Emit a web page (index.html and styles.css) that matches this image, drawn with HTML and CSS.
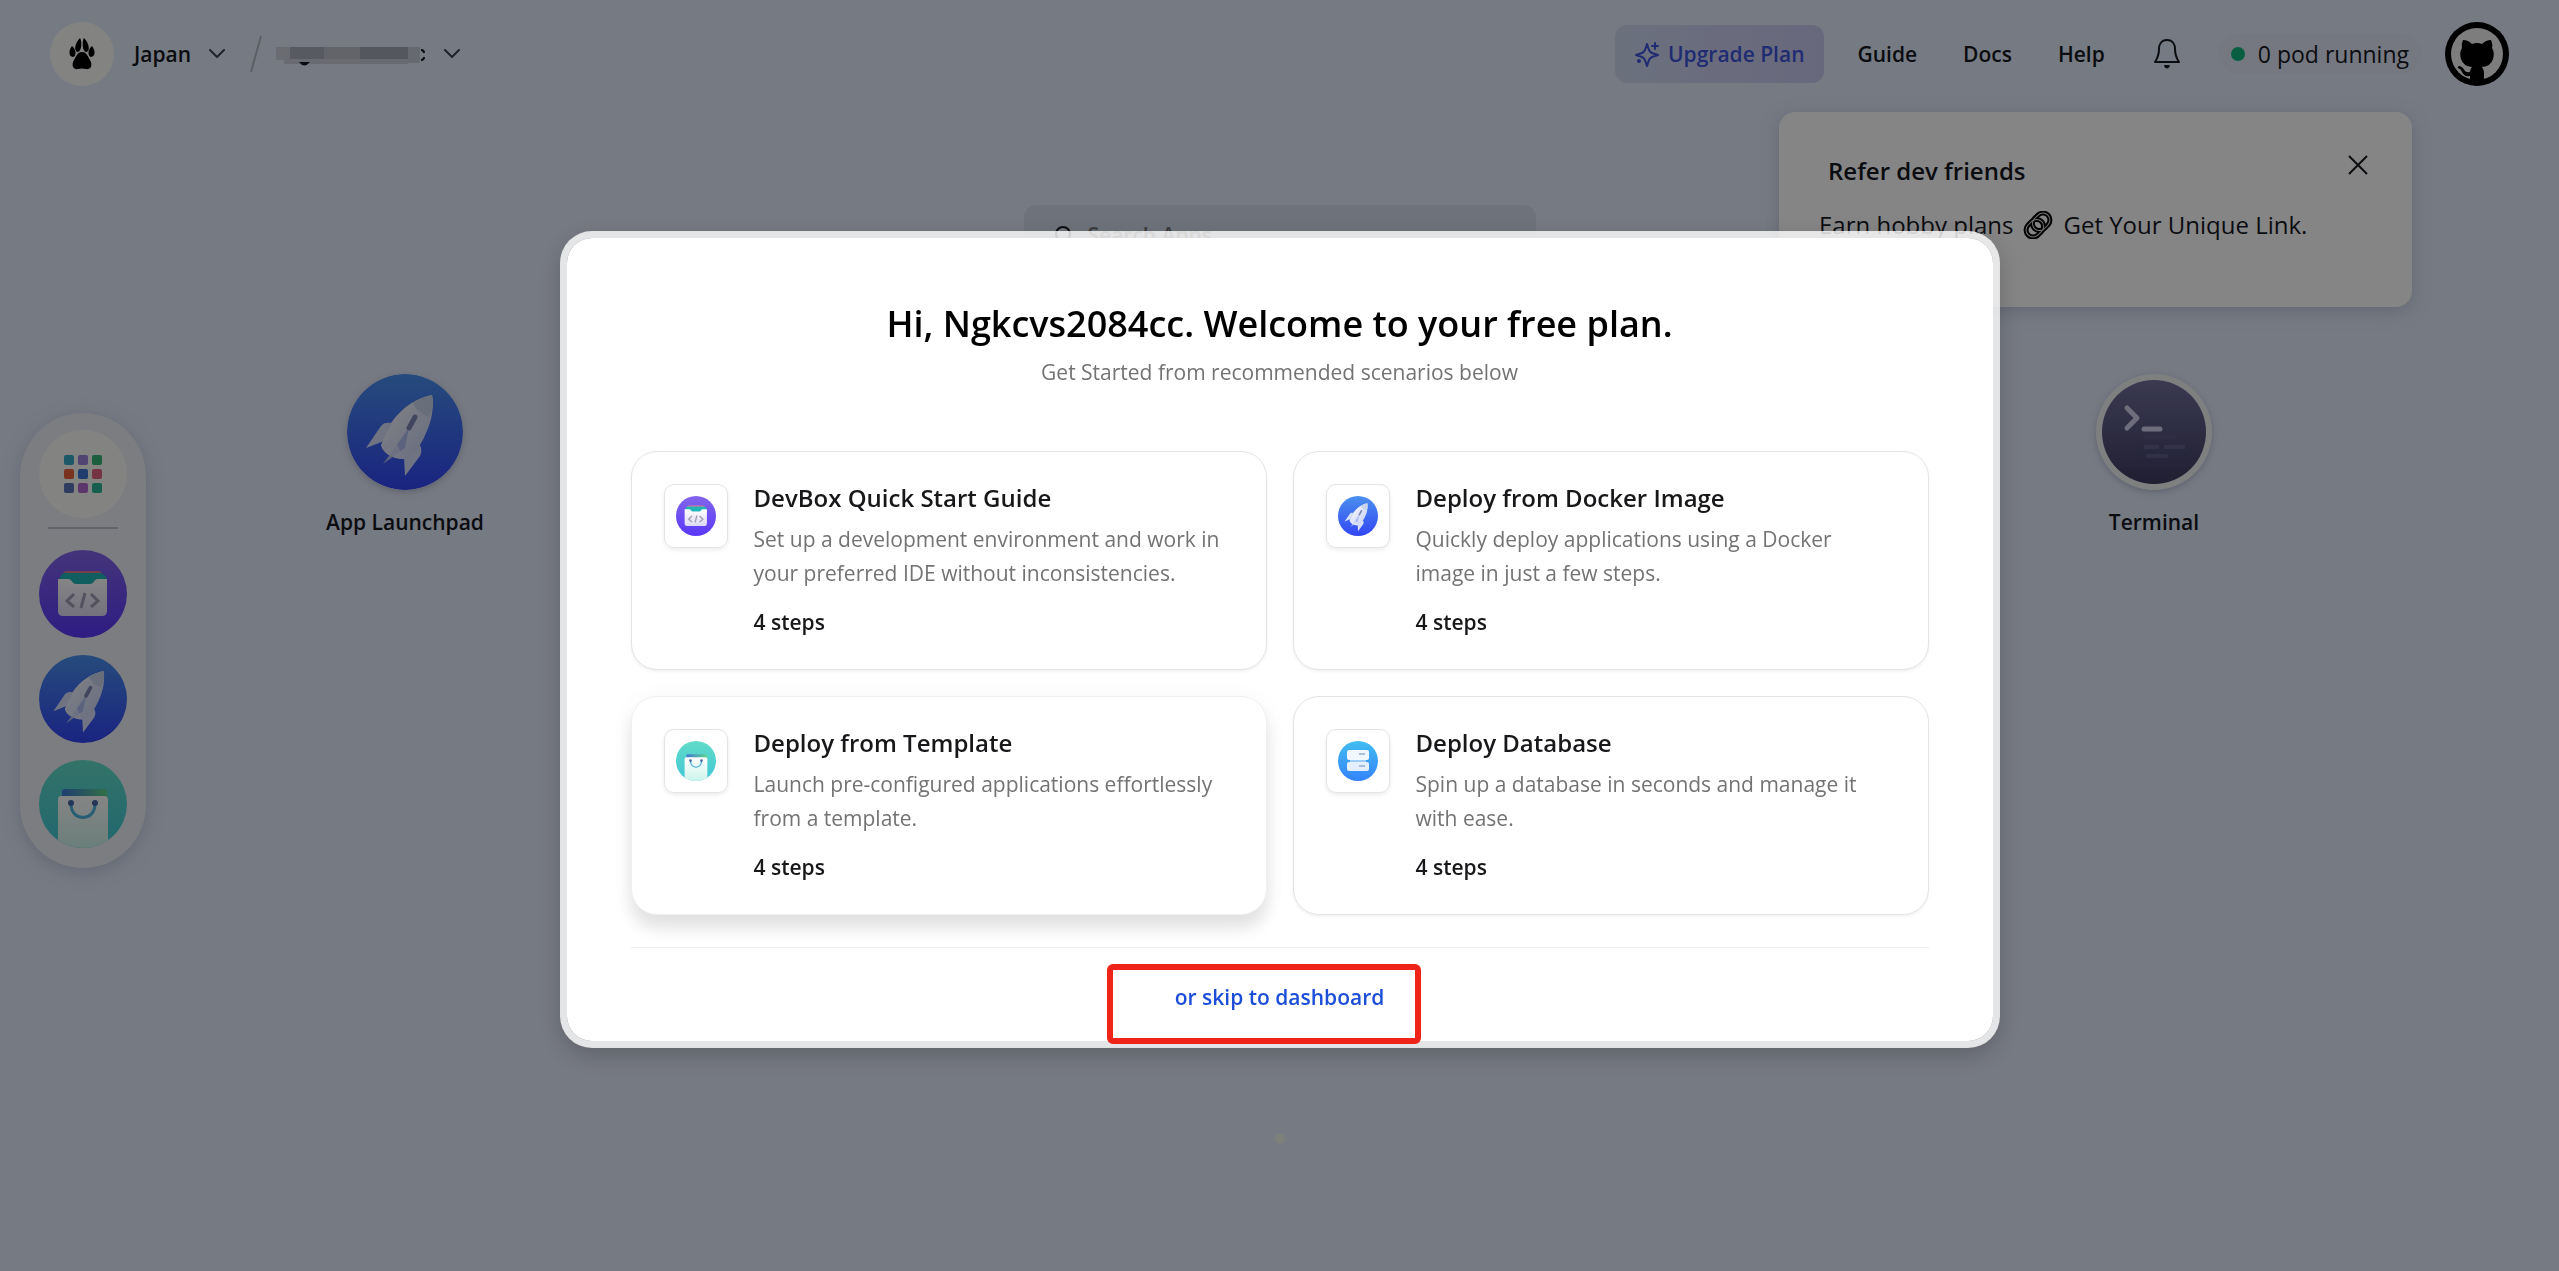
FILE: index.html
```html
<!DOCTYPE html>
<html lang="en">
<head>
<meta charset="utf-8">
<meta name="viewport" content="width=device-width, initial-scale=1">
<title>Dashboard</title>
<link rel="stylesheet" href="styles.css">
</head>
<body>
<svg class="defs" aria-hidden="true">
  <defs>
    <linearGradient id="g-blue" x1="0" y1="0" x2="0" y2="1"><stop offset="0" stop-color="#4a90ee"/><stop offset="1" stop-color="#3245f5"/></linearGradient>
    <linearGradient id="g-purple" x1="0" y1="0" x2="0" y2="1"><stop offset="0" stop-color="#8265ea"/><stop offset="1" stop-color="#5a37fa"/></linearGradient>
    <linearGradient id="g-teal" x1="0" y1="0" x2="0" y2="1"><stop offset="0" stop-color="#62dcc8"/><stop offset="1" stop-color="#3fc6d6"/></linearGradient>
    <linearGradient id="g-sky" x1="0" y1="0" x2="0" y2="1"><stop offset="0" stop-color="#40bdf0"/><stop offset="1" stop-color="#3583fa"/></linearGradient>
    <linearGradient id="g-night" x1="0" y1="0" x2="0" y2="1"><stop offset="0" stop-color="#706f9c"/><stop offset="1" stop-color="#3e3c60"/></linearGradient>
    <linearGradient id="g-body" x1="0" y1="0" x2="1" y2="1"><stop offset="0" stop-color="#ffffff"/><stop offset="1" stop-color="#c3cdf5"/></linearGradient>
    <linearGradient id="g-paper" x1="0" y1="0" x2="0" y2="1"><stop offset="0" stop-color="#ffffff"/><stop offset="1" stop-color="#dcd9f2"/></linearGradient>
    <linearGradient id="g-bag" x1="0" y1="0" x2="0" y2="1"><stop offset="0" stop-color="#ffffff"/><stop offset="1" stop-color="#cdf3ea"/></linearGradient>
    <linearGradient id="g-rim" x1="0" y1="0" x2="1" y2="0"><stop offset="0" stop-color="#3f77d8"/><stop offset="1" stop-color="#5fd68a"/></linearGradient>
    <clipPath id="c-bag"><circle cx="44" cy="44" r="44"/></clipPath>
    <symbol id="i-rocket" viewBox="0 0 116 116">
      <circle cx="58" cy="58" r="58" fill="url(#g-blue)"/>
      <path d="M44 49C40 48 36 49 34 52L19 74L37 67ZM72 70C75 74 75 78 73 82L58 102L57 83Z" fill="#d7defa"/>
      <path d="M85 21C70 24 56 32 44 49L34 71C36 79 45 85 57 85C66 81 74 72 79 59C85 46 87 34 85 21Z" fill="url(#g-body)"/>
      <path d="M85 21C79 22 71 26 66 29C69 36 74 40 82 43C86 35 87 28 85 21Z" fill="#c8d5ec"/>
      <path d="M62 54L36 90L58 74Z" fill="#aebcf0"/>
      <path d="M34 71L46 62L57 85C45 85 36 79 34 71Z" fill="#dfe5fc" opacity=".7"/>
      <path d="M68 43L62 54" stroke="#7e86b5" stroke-width="5" stroke-linecap="round"/>
    </symbol>
    <symbol id="i-devbox" viewBox="0 0 88 88">
      <circle cx="44" cy="44" r="44" fill="url(#g-purple)"/>
      <rect x="24" y="21" width="39" height="12" rx="4" fill="#e0788c"/>
      <path d="M25 23H62Q67 25 68 30V36H20V30Q21 25 25 23Z" fill="#1fb5b8"/>
      <path d="M19 29H29C33 29 33 34 37 34H51C55 34 55 29 59 29H68V61Q68 66 63 66H24Q19 66 19 61Z" fill="url(#g-paper)"/>
      <path d="M35 44L28 51L35 57M46 43L42 58M52 44L59 51L52 57" fill="none" stroke="#a09db5" stroke-width="3"/>
    </symbol>
    <symbol id="i-bag" viewBox="0 0 88 88">
      <circle cx="44" cy="44" r="44" fill="url(#g-teal)"/>
      <g clip-path="url(#c-bag)">
        <rect x="23" y="29" width="45" height="16" rx="3" fill="url(#g-rim)"/>
        <path d="M22 36H65Q69 36 69 40V88H19V40Q19 36 22 36Z" fill="url(#g-bag)"/>
      </g>
      <path d="M32 44C32 62 56 62 56 44" fill="none" stroke="#4bb4dc" stroke-width="3"/>
      <circle cx="32" cy="43" r="3" fill="#4669a8"/><circle cx="56" cy="43" r="3" fill="#4669a8"/>
    </symbol>
    <symbol id="i-database" viewBox="0 0 40 40">
      <circle cx="20" cy="20" r="20" fill="url(#g-sky)"/>
      <rect x="9" y="9" width="22" height="10" rx="2" fill="#f1f7ff"/>
      <rect x="12" y="19" width="16" height="3" fill="#9ccdfc"/>
      <rect x="9" y="21" width="22" height="9" rx="2" fill="#e4f0ff"/>
      <path d="M21 13H27M21 25H27" stroke="#a8bfe0" stroke-width="2"/>
    </symbol>
    <symbol id="i-terminal" viewBox="0 0 116 116">
      <circle cx="58" cy="58" r="58" fill="#f2f3f4"/>
      <circle cx="58" cy="58" r="52" fill="url(#g-night)"/>
      <path d="M31 34L41 44L31 54M48 55H64" fill="none" stroke="#d2d2ee" stroke-width="5" stroke-linecap="round" stroke-linejoin="round"/>
      <path d="M48 73H63M68 73H89M50 82H72" stroke="#8583b8" stroke-width="4" opacity=".35"/>
      <path d="M48 63H80" stroke="#8583b8" stroke-width="3" opacity=".15"/>
    </symbol>
    <symbol id="i-chevron" viewBox="0 0 16 10">
      <path d="M1 1L8 8L15 1" fill="none" stroke="currentColor" stroke-width="2" stroke-linecap="round" stroke-linejoin="round"/>
    </symbol>
  </defs>
</svg>

<header class="topbar">
  <div class="workspace">
    <span class="brand">
      <svg width="26" height="32" viewBox="0 0 26 32" aria-label="Home">
        <path d="M11 0C13 3 13 13 9 14C5 14 5 6 11 0ZM15 0C13 3 13 13 17 14C21 14 21 6 15 0Z"/>
        <path d="M3 8C7 11 8 18 4 19C0 19-1 13 3 8ZM23 8C19 11 18 18 22 19C26 19 27 13 23 8Z"/>
        <path d="M13 14C18 14 19 19 21 22C24 27 22 32 17 31Q13 30 9 31C4 32 2 27 5 22C7 19 8 14 13 14Z"/>
      </svg>
    </span>
    <button class="picker" type="button">Japan <svg width="16" height="10"><use href="#i-chevron"/></svg></button>
    <svg class="slash" width="12" height="38" viewBox="0 0 12 38"><path d="M11 1L1 37" stroke="#b2b6c4" stroke-width="2"/></svg>
    <button class="picker" type="button" aria-label="Workspace">
      <svg width="150" height="24" viewBox="0 0 150 24">
        <path d="M145 8Q148 8 148 11M145 18Q148 18 148 15" fill="none" stroke="#14161f" stroke-width="2"/>
        <rect y="5" width="14" height="13" fill="#cccfda"/><rect x="14" y="5" width="34" height="12" fill="#a8acb9"/>
        <rect x="48" y="5" width="36" height="12" fill="#bcc0cb"/><rect x="84" y="5" width="48" height="12" fill="#a4a8b5"/>
        <rect x="132" y="5" width="12" height="16" fill="#c6cad6"/><rect x="8" y="17" width="124" height="5" fill="#c9cdd9"/>
        <path d="M23 20Q28 27 34 20Z" fill="#14161f"/>
      </svg>
      <svg width="16" height="10"><use href="#i-chevron"/></svg>
    </button>
  </div>
  <nav class="menu">
    <button class="upgrade" type="button">
      <svg width="26" height="26" viewBox="0 0 26 26" fill="none" stroke="currentColor" stroke-width="2" stroke-linejoin="round" stroke-linecap="round"><path d="M13 3Q14 6 15 9Q16 11 18 12L24 14L18 16Q16 17 15 19L13 25L11 19Q10 17 8 16L2 14L8 12Q10 11 11 9ZM21 2V8M18 5H24"/><circle cx="5" cy="20" r="1"/></svg>
      Upgrade Plan
    </button>
    <a href="#guide">Guide</a>
    <a href="#docs">Docs</a>
    <a href="#help">Help</a>
    <button class="bell" type="button" aria-label="Notifications">
      <svg width="28" height="32" viewBox="0 0 28 32" fill="none" stroke="currentColor" stroke-width="2" stroke-linejoin="round" stroke-linecap="round"><path d="M14 2C8 2 6 7 6 11C6 18 4 21 2 24H26C24 21 22 18 22 11C22 7 20 2 14 2Z"/><path d="M12 28Q14 31 16 28Z" fill="currentColor"/></svg>
    </button>
    <span class="pods"><i class="pods-dot"></i>0 pod running</span>
    <svg class="avatar" width="64" height="64" viewBox="0 0 64 64" role="img" aria-label="Account">
      <circle cx="32" cy="32" r="32" fill="#000"/><circle cx="32" cy="32" r="26" fill="#f1efef"/>
      <path d="M18 18Q23 18 27 22Q32 20 37 22Q41 18 46 18Q48 23 47 26Q50 31 48 37Q46 44 37 45Q39 48 39 51V62H25V54Q19 55 17 50Q16 47 13 46Q12 44 15 44Q18 45 20 49Q22 51 25 50Q25 47 27 45Q18 44 16 37Q14 31 17 26Q16 22 18 18Z" fill="#000"/>
    </svg>
  </nav>
</header>

<main class="desktop">
  <aside class="dock">
    <button class="dock-grid" type="button" aria-label="All apps">
      <svg width="38" height="38" viewBox="0 0 38 38">
        <rect width="10" height="10" rx="2" fill="#39a9c8"/><rect x="14" width="10" height="10" rx="2" fill="#9b82da"/><rect x="28" width="10" height="10" rx="2" fill="#38b478"/>
        <rect y="14" width="10" height="10" rx="2" fill="#e8623c"/><rect x="14" y="14" width="10" height="10" rx="2" fill="#3f72d2"/><rect x="28" y="14" width="10" height="10" rx="2" fill="#e2627f"/>
        <rect y="28" width="10" height="10" rx="2" fill="#5873b8"/><rect x="14" y="28" width="10" height="10" rx="2" fill="#b168cc"/><rect x="28" y="28" width="10" height="10" rx="2" fill="#2fb597"/>
      </svg>
    </button>
    <hr class="dock-line">
    <button type="button" aria-label="DevBox"><svg><use href="#i-devbox"/></svg></button>
    <button type="button" aria-label="App Launchpad"><svg><use href="#i-rocket"/></svg></button>
    <button type="button" aria-label="App Store"><svg><use href="#i-bag"/></svg></button>
  </aside>
  <div class="center">
    <label class="search">
      <svg width="20" height="20" viewBox="0 0 20 20" fill="none" stroke="currentColor" stroke-width="2"><circle cx="9" cy="9" r="7"/><path d="M14 14L19 19"/></svg>
      <input type="search" placeholder="Search Apps" aria-label="Search Apps">
    </label>
    <div class="apps">
      <button class="app" type="button"><svg><use href="#i-rocket"/></svg>App Launchpad</button>
      <button class="app" type="button"><svg><use href="#i-terminal"/></svg>Terminal</button>
    </div>
    <i class="page-dot"></i>
  </div>
</main>

<section class="refer">
  <div class="refer-head">
    <h2>Refer dev friends</h2>
    <button type="button" aria-label="Close"><svg width="20" height="20" viewBox="0 0 20 20"><path d="M1 1L19 19M19 1L1 19" stroke="currentColor" stroke-width="2"/></svg></button>
  </div>
  <p>Earn hobby plans
    <svg width="30" height="28" viewBox="0 0 30 28" fill="none"><g transform="rotate(-45 15 14)"><rect x="1" y="7" width="19" height="14" rx="7" stroke="#000" stroke-width="5"/><rect x="10" y="7" width="19" height="14" rx="7" stroke="#000" stroke-width="5"/><rect x="1" y="7" width="19" height="14" rx="7" stroke="#ddd"/><rect x="10" y="7" width="19" height="14" rx="7" stroke="#ddd"/></g></svg>
    Get Your Unique Link.</p>
</section>

<div class="backdrop">
  <section class="modal" role="dialog" aria-modal="true" aria-labelledby="welcome">
    <h1 id="welcome">Hi, Ngkcvs2084cc. Welcome to your free plan.</h1>
    <p class="lead">Get Started from recommended scenarios below</p>
    <div class="cards">
      <article class="card">
        <span class="card-icon"><svg><use href="#i-devbox"/></svg></span>
        <div><h3>DevBox Quick Start Guide</h3><p>Set up a development environment and work in<br>your preferred IDE without inconsistencies.</p><b>4 steps</b></div>
      </article>
      <article class="card">
        <span class="card-icon"><svg><use href="#i-rocket"/></svg></span>
        <div><h3>Deploy from Docker Image</h3><p>Quickly deploy applications using a Docker<br>image in just a few steps.</p><b>4 steps</b></div>
      </article>
      <article class="card card-raised">
        <span class="card-icon"><svg><use href="#i-bag"/></svg></span>
        <div><h3>Deploy from Template</h3><p>Launch pre-configured applications effortlessly<br>from a template.</p><b>4 steps</b></div>
      </article>
      <article class="card">
        <span class="card-icon"><svg><use href="#i-database"/></svg></span>
        <div><h3>Deploy Database</h3><p>Spin up a database in seconds and manage it<br>with ease.</p><b>4 steps</b></div>
      </article>
    </div>
    <footer class="modal-foot">
      <a href="#dashboard">or skip to dashboard</a>
      <span class="callout"></span>
    </footer>
  </section>
</div>
</body>
</html>
```
FILE: styles.css
```css
* { box-sizing: border-box; }

body {
  margin: 0;
  min-height: 100vh;
  display: flex;
  flex-direction: column;
  position: relative;
  background: #e3eafb;
  color: #16181f;
  font: 600 21px/32px "Open Sans", "Noto Sans", sans-serif;
}

h1, h2, h3, p { margin: 0; font-weight: 600; }
a { color: inherit; text-decoration: none; }
button { padding: 0; border: 0; background: none; color: inherit; font: inherit; cursor: pointer; }
svg { display: block; flex: none; }
.defs { position: absolute; width: 0; height: 0; }

/* top bar */
.topbar {
  display: flex;
  justify-content: space-between;
  align-items: center;
  height: 108px;
  padding: 0 50px;
}
.workspace { display: flex; align-items: center; }
.brand {
  display: grid;
  place-items: center;
  width: 64px;
  height: 64px;
  margin-right: 20px;
  border-radius: 50%;
  background: #fbfbfa;
}
.picker { display: flex; align-items: center; gap: 18px; }
.picker svg { color: #3d4254; }
.slash { margin: 0 14px 0 25px; }
.menu { display: flex; align-items: center; }
.menu a { margin-left: 46px; }
.upgrade {
  display: flex;
  align-items: center;
  gap: 8px;
  height: 58px;
  margin-right: -12px;
  padding: 0 19px;
  border-radius: 12px;
  background: linear-gradient(90deg, #cbd9f0, #cccdf0 60%, #c6c8ec);
  color: #3c55da;
}
.bell { margin: 0 38px 0 48px; }
.pods {
  display: flex;
  align-items: center;
  gap: 13px;
  padding: 4px 12px;
  border-radius: 20px;
  background: #e0e6f6;
  font-size: 23px;
  font-weight: 400;
}
.pods-dot { width: 14px; height: 14px; border-radius: 50%; background: #0fb57e; }
.avatar { margin-left: 24px; }

/* desktop */
.desktop {
  flex: 1;
  display: grid;
  grid-template-columns: 305px 1fr 305px;
  align-items: start;
}
.dock {
  display: flex;
  flex-direction: column;
  align-items: center;
  width: 126px;
  margin: 305px 0 0 20px;
  padding: 17px 0 20px;
  gap: 17px;
  border-radius: 63px;
  background: #edf0f7;
  box-shadow: 0 4px 16px #9aa3bd80;
}
.dock svg { width: 88px; height: 88px; }
.dock .dock-grid { display: grid; place-items: center; width: 88px; height: 88px; border-radius: 50%; background: #fbfbfa; }
.dock .dock-grid svg { width: 38px; height: 38px; }
.dock-line { width: 70px; height: 2px; margin: -8px 0 4px; border: 0; background: #b9bfcc; }
.center { display: flex; flex-direction: column; align-items: center; padding-top: 97px; }
.search {
  display: flex;
  align-items: center;
  gap: 12px;
  width: 512px;
  height: 60px;
  padding: 0 30px;
  border-radius: 12px;
  background: #d3dceb;
}
.search input { flex: 1; min-width: 0; border: 0; background: none; font: inherit; }
.apps { display: flex; justify-content: space-between; align-self: stretch; margin-top: 109px; }
.app { display: flex; flex-direction: column; align-items: center; gap: 16px; width: 200px; }
.app svg { width: 116px; height: 116px; border-radius: 50%; box-shadow: 0 2px 6px #8890a880; }
.page-dot { width: 10px; height: 10px; margin-top: 596px; border-radius: 50%; background: #f3f5e9; }

/* referral popover */
.refer {
  position: absolute;
  top: 112px;
  right: 147px;
  width: 633px;
  height: 195px;
  padding: 37px 40px;
  border-radius: 16px;
  background: #fff;
  box-shadow: 0 4px 16px #9aa3bd80;
}
.refer-head { display: flex; justify-content: space-between; align-items: flex-start; padding: 6px 4px 0 9px; }
.refer h2 { font-size: 24px; line-height: 32px; }
.refer p { display: flex; align-items: center; gap: 10px; margin-top: 22px; font-size: 24px; font-weight: 400; }

/* welcome dialog */
.backdrop {
  position: fixed;
  inset: 0;
  display: grid;
  place-items: center;
  padding-top: 8px;
  background: rgba(0, 0, 0, .48);
}
.modal {
  position: relative;
  width: min(1440px, 94vw);
  padding: 60px 64px 0;
  border: 7px solid rgba(255, 255, 255, .8);
  border-radius: 32px;
  background: #fff padding-box;
  box-shadow: 0 8px 24px rgba(0, 0, 0, .2);
  text-align: center;
}
.modal h1 { color: #000; font-size: 36px; line-height: 52px; }
.lead { margin-top: 6px; color: #737373; font-size: 21px; font-weight: 400; }
.cards { display: grid; grid-template-columns: 1fr 1fr; gap: 26px; margin-top: 63px; text-align: left; }
.card {
  display: flex;
  gap: 26px;
  height: 219px;
  padding: 32px;
  border: 1px solid #e4e4e7;
  border-radius: 26px;
  background: #fff;
  box-shadow: 0 2px 3px rgba(0, 0, 0, .05);
}
.card-raised { border-color: #f0f0f1; box-shadow: 0 14px 16px rgba(0, 0, 0, .1), 0 2px 24px rgba(0, 0, 0, .04); }
.card-icon {
  display: grid;
  place-items: center;
  width: 64px;
  height: 64px;
  border: 1px solid #e4e4e7;
  border-radius: 10px;
  box-shadow: 0 2px 4px rgba(0, 0, 0, .08);
}
.card-icon svg { width: 40px; height: 40px; }
.card h3 { color: #18181b; font-size: 24px; line-height: 28px; }
.card p { margin: 10px 0 16px; color: #737373; font-size: 21px; line-height: 34px; font-weight: 400; }
.card b { color: #18181b; font-weight: 600; }
.modal-foot { position: relative; margin-top: 32px; padding: 33px 0 28px; border-top: 1px solid #ececee; color: #1d4ed8; }
.modal-foot a { display: block; }
.callout {
  position: absolute;
  top: 16px;
  left: calc(50% - 173px);
  width: 314px;
  height: 80px;
  border: 6px solid #ef2418;
  border-radius: 6px;
  pointer-events: none;
}
```
